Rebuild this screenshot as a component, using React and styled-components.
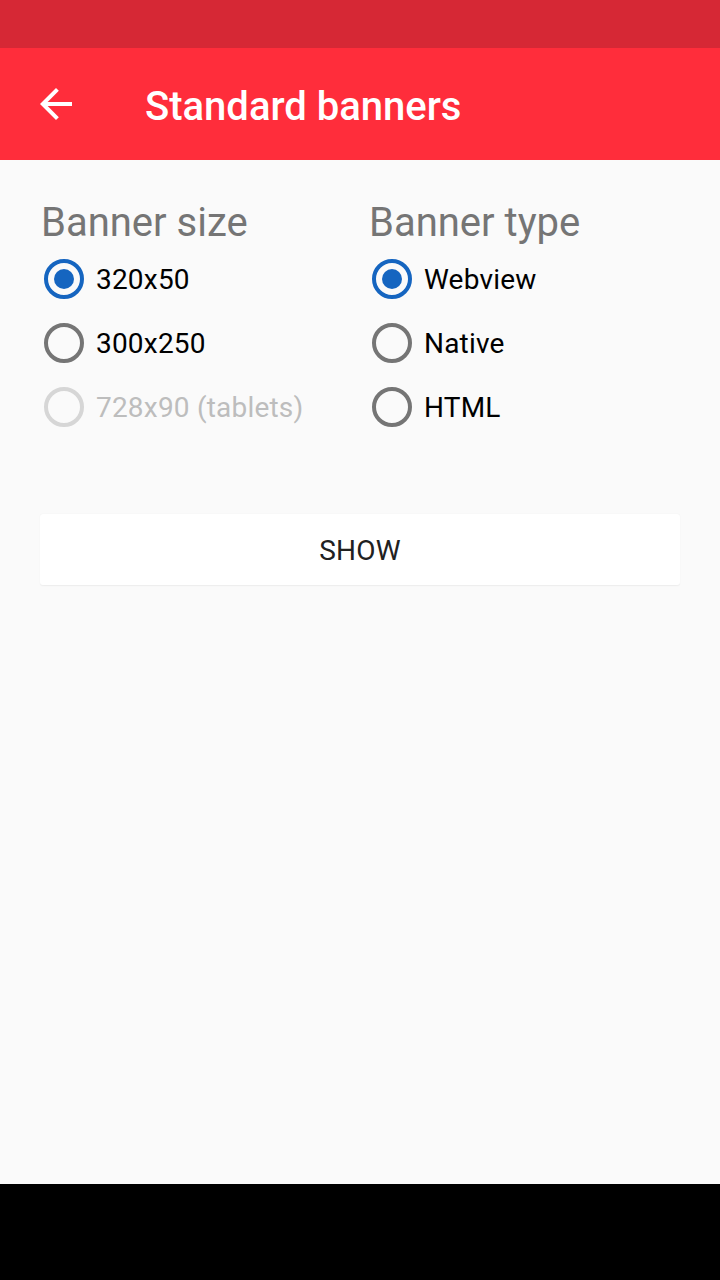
import React from "react";
import styled, { createGlobalStyle } from "styled-components";

const Global = createGlobalStyle`
  html, body { margin: 0; padding: 0; }
  body { font-family: Roboto, "Liberation Sans", sans-serif; background: #fafafa; }
  * { box-sizing: border-box; }
`;

const Screen = styled.div`
  width: 720px;
  height: 1280px;
  display: flex;
  flex-direction: column;
  background: #fafafa;
`;

const StatusBar = styled.div`
  height: 48px;
  flex: none;
  background: #d62835;
`;

const Toolbar = styled.header`
  height: 112px;
  flex: none;
  background: #ff2d3b;
  display: flex;
  align-items: center;
  padding-left: 32px;
  gap: 65px;
`;

const BackButton = styled.button`
  width: 48px;
  height: 48px;
  padding: 0;
  border: none;
  background: none;
  display: flex;
  align-items: center;
  justify-content: center;
  svg { display: block; }
`;

const Title = styled.h1`
  margin: 0;
  font-family: Roboto, "Liberation Sans", sans-serif;
  font-weight: 500;
  font-size: 40px;
  color: #ffffff;
  line-height: 48px;
  padding-top: 5px;
`;

const Content = styled.main`
  flex: 1;
  padding: 39px 40px 0 40px;
  display: flex;
  flex-direction: column;
`;

const Columns = styled.div`
  display: grid;
  grid-template-columns: 328px 1fr;
`;

const Group = styled.div`
  display: flex;
  flex-direction: column;
`;

const GroupTitle = styled.h2`
  margin: 0 0 0 1px;
  font-weight: 400;
  font-size: 40px;
  line-height: 48px;
  color: #757575;
`;

const Row = styled.label`
  height: 64px;
  display: flex;
  align-items: center;
  gap: 12px;
  font-size: 28px;
  color: ${(p) => (p.$disabled ? "#bdbdbd" : "#000000")};
  letter-spacing: 0.2px;
`;

const Radio = styled.span`
  width: 40px;
  height: 40px;
  margin-left: 4px;
  border-radius: 50%;
  border: 4px solid
    ${(p) => (p.$checked ? "#1565c0" : p.$disabled ? "#d6d6d6" : "#757575")};
  display: flex;
  align-items: center;
  justify-content: center;
  flex: none;
  &::after {
    content: "";
    width: 20px;
    height: 20px;
    border-radius: 50%;
    background: #1565c0;
    display: ${(p) => (p.$checked ? "block" : "none")};
  }
`;

const ShowButton = styled.button`
  margin-top: 75px;
  height: 71px;
  width: 100%;
  border: none;
  border-radius: 3px;
  background: #ffffff;
  box-shadow: 0 0.5px 1.5px rgba(0, 0, 0, 0.06);
  font-family: Roboto, "Liberation Sans", sans-serif;
  font-weight: 400;
  font-size: 28px;
  color: #212121;
  letter-spacing: 0.2px;
  padding-top: 2px;
`;

const NavBar = styled.div`
  height: 96px;
  flex: none;
  background: #000000;
`;

const sizes = [
  { label: "320x50", checked: true },
  { label: "300x250" },
  { label: "728x90 (tablets)", disabled: true },
];
const types = [
  { label: "Webview", checked: true },
  { label: "Native" },
  { label: "HTML" },
];

function RadioGroup({ title, items }) {
  return (
    <Group>
      <GroupTitle>{title}</GroupTitle>
      {items.map((it) => (
        <Row key={it.label} $disabled={it.disabled}>
          <Radio $checked={it.checked} $disabled={it.disabled} />
          {it.label}
        </Row>
      ))}
    </Group>
  );
}

export default function App() {
  return (
    <Screen>
      <Global />
      <StatusBar />
      <Toolbar>
        <BackButton aria-label="Back">
          <svg width="48" height="48" viewBox="0 0 24 24">
            <path
              fill="#ffffff"
              d="M20 11H7.83l5.59-5.59L12 4l-8 8 8 8 1.41-1.41L7.83 13H20v-2z"
            />
          </svg>
        </BackButton>
        <Title>Standard banners</Title>
      </Toolbar>
      <Content>
        <Columns>
          <RadioGroup title="Banner size" items={sizes} />
          <RadioGroup title="Banner type" items={types} />
        </Columns>
        <ShowButton>SHOW</ShowButton>
      </Content>
      <NavBar />
    </Screen>
  );
}
